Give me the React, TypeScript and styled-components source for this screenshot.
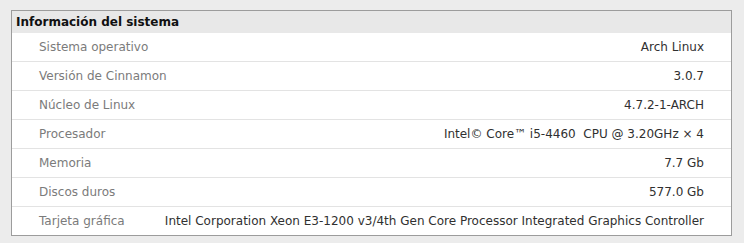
import React from "react";
import styled, { createGlobalStyle } from "styled-components";

const Global = createGlobalStyle`
  html, body { margin: 0; padding: 0; background: #ececec; }
  body { font-family: "DejaVu Sans", "Liberation Sans", sans-serif; font-size: 12px; }
`;

const Page = styled.div`
  padding: 10px 0 0 11px;
`;

const Panel = styled.section`
  width: 719px;
  border: 1px solid #9c9c9c;
  background: #ffffff;
`;

const Header = styled.div`
  height: 22px;
  display: flex;
  align-items: center;
  padding-left: 4px;
  background: #e8e8e8;
  font-weight: bold;
  color: #111;
  font-size: 12px;
`;

const Row = styled.div`
  height: 28px;
  display: flex;
  align-items: center;
  justify-content: space-between;
  padding: 0 27px 0 27px;
  border-bottom: 1px solid #e3e3e3;
  &:last-child { border-bottom: none; }
`;

const Label = styled.span`
  color: #7b7b7b;
`;

const Value = styled.span`
  color: #303030;
  white-space: pre;
`;

const rows: [string, string][] = [
  ["Sistema operativo", "Arch Linux"],
  ["Versión de Cinnamon", "3.0.7"],
  ["Núcleo de Linux", "4.7.2-1-ARCH"],
  ["Procesador", "Intel© Core™ i5-4460  CPU @ 3.20GHz × 4"],
  ["Memoria", "7.7 Gb"],
  ["Discos duros", "577.0 Gb"],
  ["Tarjeta gráfica", "Intel Corporation Xeon E3-1200 v3/4th Gen Core Processor Integrated Graphics Controller"],
];

export default function App() {
  return (
    <Page>
      <Global />
      <Panel>
        <Header>Información del sistema</Header>
        {rows.map(([l, v]) => (
          <Row key={l}>
            <Label>{l}</Label>
            <Value>{v}</Value>
          </Row>
        ))}
      </Panel>
    </Page>
  );
}
